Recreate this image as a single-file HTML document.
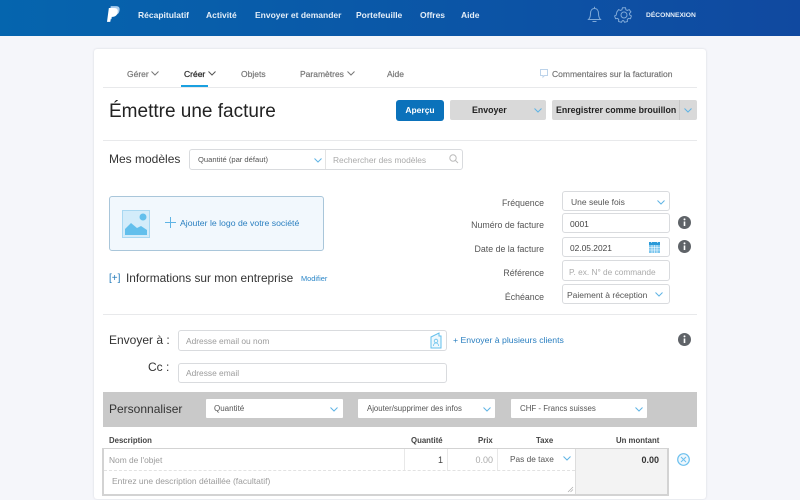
<!DOCTYPE html>
<html><head><meta charset="utf-8"><style>
*{box-sizing:border-box}
html,body{margin:0;padding:0}
body{width:800px;height:500px;overflow:hidden;background:#f5f6fa;position:relative;font-family:"Liberation Sans",sans-serif;color:#333;filter:blur(.3px)}
.t{position:absolute;white-space:nowrap;line-height:14px}
.b{position:absolute;background:#fff;border:1px solid #d9dbde;border-radius:3px}
.n{font-weight:bold;font-size:8.5px;color:#e4eef8;top:8px}
.g{font-size:8.5px;color:#777;top:67px;-webkit-text-stroke:.2px #777}
.l{font-size:8.8px;color:#555}
.ph{font-size:8.4px;color:#9b9b9b}
svg{position:absolute;overflow:visible}
.chev{fill:none;stroke:#5fb4e5;stroke-width:1}
.h{font-size:7.8px;font-weight:bold;color:#444;top:434px}
</style></head><body>
<div style="position:absolute;left:0;top:0;width:800px;height:36px;background:linear-gradient(90deg,#0565ae,#1049a0)"></div>
<svg style="left:107px;top:6px" width="13" height="17" viewBox="0 0 14 18"><path d="M4 0h6c3 0 4 2 3.500 4.500C13 8 11 9.500 8 9.500H6L5 14H2z" fill="#a9cdee"/><path d="M2 2h6c3 0 4 2 3.500 4.500C11 10 9 11.500 6 11.500H4.500L3.500 17H0z" fill="#fff"/></svg>
<div class="t n" style="left:138px">Récapitulatif</div>
<div class="t n" style="left:206px">Activité</div>
<div class="t n" style="left:255px">Envoyer et demander</div>
<div class="t n" style="left:356px">Portefeuille</div>
<div class="t n" style="left:420px">Offres</div>
<div class="t n" style="left:461px">Aide</div>
<svg style="left:587px;top:6px" width="15" height="17" viewBox="0 0 15 17"><path d="M1.500 13.500c1.500-1.500 2-3 2-6 0-3 1.500-5 4-5s4 2 4 5c0 3 .5 4.500 2 6zM7.500 2.500V.8M5.500 15.500h4" fill="none" stroke="#7fa9d8" stroke-width="1"/></svg>
<svg style="left:616px;top:7px" width="16" height="16" viewBox="0 0 16 16"><circle cx="8" cy="8" r="3" fill="none" stroke="#7fa9d8"/><path d="M6.500.8h3l.4 2 1.400.7 1.900-.9 1.700 2.300-1.400 1.500.2 1.600 1.700 1-1 2.700-2-.3-1.100 1.100.1 2-2.800.8-1-1.700h-1.200l-1 1.700-2.800-.8.100-2-1.100-1.100-2 .3-1-2.700 1.700-1 .2-1.600L.9 4.900l1.700-2.300 1.900.9 1.400-.7z" fill="none" stroke="#7fa9d8"/></svg>
<div class="t" style="left:646px;top:9px;font-size:6.7px;font-weight:bold;color:#e4eef8">DÉCONNEXION</div>

<div style="position:absolute;left:94px;top:49px;width:612px;height:450px;background:#fff;border-radius:3px;box-shadow:0 0 2px #d4d6dc"></div>
<div class="t g" style="left:127px">Gérer</div>
<svg style="left:151px;top:71px" width="8" height="5"><path class="chev" style="stroke:#777" d="M.5.5 4 4 7.500.5"/></svg>
<div class="t g" style="left:184px;color:#333;-webkit-text-stroke:.3px #333">Créer</div>
<svg style="left:208px;top:71px" width="8" height="5"><path class="chev" style="stroke:#555" d="M.5.5 4 4 7.500.5"/></svg>
<div class="t g" style="left:241px">Objets</div>
<div class="t g" style="left:300px">Paramètres</div>
<svg style="left:347px;top:71px" width="8" height="5"><path class="chev" style="stroke:#777" d="M.5.5 4 4 7.500.5"/></svg>
<div class="t g" style="left:387px">Aide</div>
<svg style="left:540px;top:69px" width="8" height="9"><path d="M.5.5h7v6H4.500L3 8V6.500H.5z" fill="none" stroke="#bcd3ea"/></svg>
<div class="t g" style="left:552px">Commentaires sur la facturation</div>
<div style="position:absolute;left:103px;top:87px;width:594px;height:1px;background:#e8e9eb"></div>
<div style="position:absolute;left:181px;top:85px;width:27px;height:2px;background:#1aa0e0"></div>

<div class="t" style="left:109px;top:101px;font-size:19px;line-height:22px;color:#222">Émettre une facture</div>
<div style="position:absolute;left:396px;top:100px;width:48px;height:21px;background:#0b72bb;border-radius:3px;color:#fff;font-size:8.500px;font-weight:bold;text-align:center;line-height:21px">Aperçu</div>
<div style="position:absolute;left:450px;top:100px;width:96px;height:20px;background:#d9d9d9;border-radius:2px;font-size:8.800px;font-weight:bold;color:#222;line-height:20px;padding-left:22px">Envoyer</div>
<svg style="left:534px;top:108px" width="8" height="5"><path class="chev" d="M.5.5 4 4 7.500.5"/></svg>
<div style="position:absolute;left:552px;top:100px;width:145px;height:20px;background:#d9d9d9;border-radius:2px;font-size:8.800px;font-weight:bold;color:#222;line-height:20px;padding-left:4px;white-space:nowrap">Enregistrer comme brouillon</div>
<div style="position:absolute;left:679px;top:100px;width:1px;height:20px;background:#c8c8c8"></div>
<svg style="left:684px;top:108px" width="8" height="5"><path class="chev" d="M.5.5 4 4 7.500.5"/></svg>
<div style="position:absolute;left:103px;top:140px;width:594px;height:1px;background:#e8e9eb"></div>

<div class="t" style="left:109px;top:152px;font-size:12px;color:#333">Mes modèles</div>
<div class="b" style="left:189px;top:149px;width:274px;height:21px"></div>
<div style="position:absolute;left:325px;top:150px;width:1px;height:19px;background:#e3e3e3"></div>
<div class="t" style="left:198px;top:153px;font-size:7.600px;color:#555">Quantité (par défaut)</div>
<svg style="left:314px;top:158px" width="8" height="5"><path class="chev" d="M.5.5 4 4 7.500.5"/></svg>
<div class="t ph" style="left:333px;top:153px;color:#aaa">Rechercher des modèles</div>
<svg style="left:449px;top:154px" width="10" height="10"><circle cx="4" cy="4" r="3.200" fill="none" stroke="#bbb"/><path d="M6.500 6.500 9 9" stroke="#bbb"/></svg>

<div style="position:absolute;left:109px;top:196px;width:215px;height:55px;background:#f2f8fd;border:1px solid #a9c6da;border-radius:3px"></div>
<svg style="left:122px;top:210px" width="28" height="28"><rect x=".5" y=".5" width="27" height="27" fill="#d3ecfa" stroke="#a8d8f2"/><circle cx="21" cy="7" r="3.500" fill="#62bfec"/><path d="M3 25v-6l6-6 6 5 4-2 6 4v5z" fill="#62bfec"/></svg>
<svg style="left:165px;top:217px" width="11" height="11"><path d="M5.500 0v11M0 5.500h11" stroke="#5fb4e5"/></svg>
<div class="t" style="left:180px;top:216px;font-size:8.700px;color:#2a7fc0">Ajouter le logo de votre société</div>
<div class="t" style="left:109px;top:272px;font-size:10px;color:#1f78b8">[+]</div>
<div class="t" style="left:126px;top:271px;font-size:11.850px;color:#333">Informations sur mon entreprise</div>
<div class="t" style="left:301px;top:272px;font-size:7.400px;color:#2a86c8">Modifier</div>

<div class="t l" style="right:256px;top:196px">Fréquence</div>
<div class="t l" style="right:256px;top:218px">Numéro de facture</div>
<div class="t l" style="right:256px;top:242px">Date de la facture</div>
<div class="t l" style="right:256px;top:266px">Référence</div>
<div class="t l" style="right:256px;top:290px">Échéance</div>
<div class="b" style="left:562px;top:191px;width:108px;height:20px"></div>
<div class="t" style="left:571px;top:195px;font-size:8.500px;color:#555">Une seule fois</div>
<svg style="left:657px;top:200px" width="8" height="5"><path class="chev" d="M.5.5 4 4 7.500.5"/></svg>
<div class="b" style="left:562px;top:213px;width:108px;height:20px"></div>
<div class="t" style="left:570px;top:217px;font-size:8.500px;color:#444">0001</div>
<div class="b" style="left:562px;top:237px;width:108px;height:20px"></div>
<div class="t" style="left:570px;top:241px;font-size:8.400px;color:#444">02.05.2021</div>
<svg style="left:649px;top:241px" width="11" height="12"><rect x="0" y="1" width="11" height="11" fill="#7cc6ee"/><rect x="0" y="1" width="11" height="3" fill="#2b9ad8"/><path d="M2.500 0v2M8.500 0v2M0 6.500h11M0 9h11M3 4v8M5.500 4v8M8 4v8" stroke="#fff" stroke-width=".6"/></svg>
<div class="b" style="left:562px;top:260px;width:108px;height:21px"></div>
<div class="t ph" style="left:569px;top:265px;color:#aaa;font-size:8.300px">P. ex. N° de commande</div>
<div class="b" style="left:562px;top:284px;width:108px;height:20px"></div>
<div class="t" style="left:567px;top:288px;font-size:8.500px;color:#555">Paiement à réception</div>
<svg style="left:655px;top:292px" width="8" height="5"><path class="chev" d="M.5.5 4 4 7.500.5"/></svg>
<svg style="left:678px;top:216px" width="13" height="13"><circle cx="6.500" cy="6.500" r="6.500" fill="#5f6368"/><path d="M6.500 5.500v4.500" stroke="#fff" stroke-width="1.600"/><circle cx="6.500" cy="3.400" r="1" fill="#fff"/></svg>
<svg style="left:678px;top:240px" width="13" height="13"><circle cx="6.500" cy="6.500" r="6.500" fill="#5f6368"/><path d="M6.500 5.500v4.500" stroke="#fff" stroke-width="1.600"/><circle cx="6.500" cy="3.400" r="1" fill="#fff"/></svg>
<div style="position:absolute;left:103px;top:314px;width:594px;height:1px;background:#e8e9eb"></div>

<div class="t" style="left:109px;top:333px;font-size:12px;color:#333">Envoyer à :</div>
<div class="b" style="left:178px;top:330px;width:269px;height:21px"></div>
<div class="t ph" style="left:186px;top:334px">Adresse email ou nom</div>
<svg style="left:430px;top:332px" width="12" height="17"><path d="M1 5 9 1v3h2v12H1z" fill="#eef8fd" stroke="#62bfec"/><circle cx="6" cy="9" r="1.800" fill="none" stroke="#62bfec" stroke-width=".8"/><path d="M3.500 14c0-4 5-4 5 0" fill="none" stroke="#62bfec" stroke-width=".8"/></svg>
<div class="t" style="left:453px;top:333px;font-size:8.700px;color:#2a7fc0">+ Envoyer à plusieurs clients</div>
<svg style="left:678px;top:333px" width="13" height="13"><circle cx="6.500" cy="6.500" r="6.500" fill="#5f6368"/><path d="M6.500 5.500v4.500" stroke="#fff" stroke-width="1.600"/><circle cx="6.500" cy="3.400" r="1" fill="#fff"/></svg>
<div class="t" style="left:148px;top:360px;font-size:12px;color:#333">Cc :</div>
<div class="b" style="left:178px;top:363px;width:269px;height:20px"></div>
<div class="t ph" style="left:186px;top:366px">Adresse email</div>

<div style="position:absolute;left:103px;top:392px;width:594px;height:35px;background:#c9c9c9"></div>
<div class="t" style="left:109px;top:402px;font-size:12px;color:#333">Personnaliser</div>
<div style="position:absolute;left:206px;top:399px;width:137px;height:19px;background:#fff;border-radius:1px"></div>
<div class="t" style="left:214px;top:402px;font-size:8px;color:#555">Quantité</div>
<svg style="left:330px;top:407px" width="8" height="5"><path class="chev" d="M.5.5 4 4 7.500.5"/></svg>
<div style="position:absolute;left:358px;top:399px;width:137px;height:19px;background:#fff;border-radius:1px"></div>
<div class="t" style="left:367px;top:402px;font-size:7.800px;color:#555">Ajouter/supprimer des infos</div>
<svg style="left:483px;top:407px" width="8" height="5"><path class="chev" d="M.5.5 4 4 7.500.5"/></svg>
<div style="position:absolute;left:511px;top:399px;width:136px;height:19px;background:#fff;border-radius:1px"></div>
<div class="t" style="left:520px;top:402px;font-size:7.900px;color:#555">CHF - Francs suisses</div>
<svg style="left:635px;top:407px" width="8" height="5"><path class="chev" d="M.5.5 4 4 7.500.5"/></svg>

<div class="t h" style="left:109px">Description</div>
<div class="t h" style="left:411px">Quantité</div>
<div class="t h" style="left:478px">Prix</div>
<div class="t h" style="left:536px">Taxe</div>
<div class="t h" style="left:616px">Un montant</div>

<div style="position:absolute;left:102px;top:448px;width:567px;height:48px;background:#fff;border:2px solid #d3d3d3;border-top-width:1px"></div>
<div style="position:absolute;left:575px;top:449px;width:92px;height:45px;background:#f3f3f3;border-left:1px solid #ddd"></div>
<div style="position:absolute;left:404px;top:449px;width:1px;height:22px;background:#e8e8e8"></div>
<div style="position:absolute;left:447px;top:449px;width:1px;height:22px;background:#e8e8e8"></div>
<div style="position:absolute;left:497px;top:449px;width:1px;height:22px;background:#e8e8e8"></div>
<div style="position:absolute;left:104px;top:470px;width:471px;border-top:1px dashed #e2e2e2"></div>
<div class="t ph" style="left:109px;top:453px">Nom de l'objet</div>
<div class="t" style="right:357px;top:453px;font-size:9px;color:#444">1</div>
<div class="t" style="right:307px;top:453px;font-size:9px;color:#aaa">0.00</div>
<div class="t" style="left:510px;top:452px;font-size:8.300px;color:#555">Pas de taxe</div>
<svg style="left:563px;top:456px" width="8" height="5"><path class="chev" d="M.5.5 4 4 7.500.5"/></svg>
<div class="t" style="right:141px;top:453px;font-size:9px;font-weight:bold;color:#333">0.00</div>
<div class="t ph" style="left:112px;top:474px;font-size:8.500px">Entrez une description détaillée (facultatif)</div>
<svg style="left:567px;top:486px" width="6" height="6"><path d="M1 6 6 1M3.500 6 6 3.500" stroke="#aaa" stroke-width=".7"/></svg>
<svg style="left:677px;top:453px" width="13" height="13"><circle cx="6.500" cy="6.500" r="5.800" fill="#eef7fd" stroke="#6cc0ee" stroke-width="1.200"/><path d="M4 4l5 5M9 4l-5 5" stroke="#6cc0ee"/></svg>
</body></html>
